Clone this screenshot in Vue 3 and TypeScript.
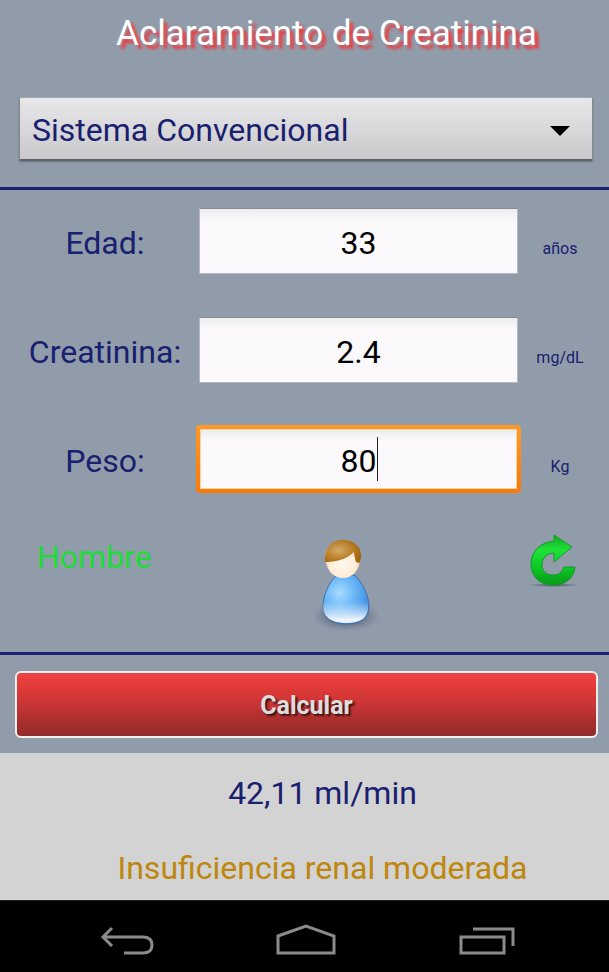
<script setup lang="ts">
import { ref, computed } from 'vue'

interface Field {
  id: string
  label: string
  unit: string
  value: string
}

const system = ref('Sistema Convencional')
const fields = ref<Field[]>([
  { id: 'edad', label: 'Edad:', unit: 'años', value: '33' },
  { id: 'creatinina', label: 'Creatinina:', unit: 'mg/dL', value: '2.4' },
  { id: 'peso', label: 'Peso:', unit: 'Kg', value: '80' },
])
const activeField = ref('peso')
const male = ref(true)
const sexLabel = computed(() => (male.value ? 'Hombre' : 'Mujer'))
const clearance = ref('42,11 ml/min')
const diagnosis = ref('Insuficiencia renal moderada')
</script>

<template>
  <div class="screen">
    <main class="app">
      <header class="head">
        <h1 class="title">Aclaramiento de Creatinina</h1>
        <div class="picker">
          <select v-model="system" class="system" aria-label="Sistema">
            <option>Sistema Convencional</option>
            <option>Sistema Internacional</option>
          </select>
          <svg class="caret" viewBox="0 0 20 10" aria-hidden="true"><path d="M0 0H20L10 10Z" /></svg>
        </div>
      </header>

      <section class="form">
        <div v-for="f in fields" :key="f.id" class="row">
          <label class="label" :for="f.id">{{ f.label }}</label>
          <div class="box" :class="{ active: f.id === activeField }">
            <input :id="f.id" v-model="f.value" class="input" type="text" inputmode="decimal" @focus="activeField = f.id" />
            <span v-if="f.id === activeField" class="cursor"></span>
          </div>
          <span class="unit">{{ f.unit }}</span>
        </div>
        <div class="row sex">
          <span class="sex-label">{{ sexLabel }}</span>
          <svg class="person" viewBox="0 0 74 96" aria-hidden="true">
            <defs>
              <radialGradient id="shade">
                <stop offset="0.4" stop-color="#46566a" stop-opacity="0.75" />
                <stop offset="1" stop-color="#6d7c8e" stop-opacity="0" />
              </radialGradient>
              <radialGradient id="body" cx="0.36" cy="0.36" r="0.68">
                <stop offset="0" stop-color="#a9dcff" />
                <stop offset="0.45" stop-color="#6db9f8" />
                <stop offset="1" stop-color="#3e8de0" />
              </radialGradient>
              <linearGradient id="glow" x1="0" y1="0" x2="0" y2="1">
                <stop offset="0.55" stop-color="#ffffff" stop-opacity="0" />
                <stop offset="0.93" stop-color="#ffffff" stop-opacity="0.9" />
              </linearGradient>
              <radialGradient id="face" cx="0.5" cy="0.6" r="0.6">
                <stop offset="0" stop-color="#fff8ed" />
                <stop offset="0.6" stop-color="#ffeed9" />
                <stop offset="1" stop-color="#ecc59a" />
              </radialGradient>
              <radialGradient id="hair" cx="0.38" cy="0.45" r="0.65">
                <stop offset="0" stop-color="#d3a967" />
                <stop offset="0.6" stop-color="#b97e28" />
                <stop offset="1" stop-color="#a36309" />
              </radialGradient>
            </defs>
            <ellipse cx="36" cy="80" rx="35" ry="16" fill="url(#shade)" />
            <path d="M26 40C19 46 13 60 13 70C13 83 24 88 37 88C50 88 59 82 59 71C59 59 52 47 45 39Z" fill="url(#body)" stroke="#416eae" stroke-width="1" />
            <path d="M26 40C19 46 13 60 13 70C13 83 24 87 37 87C50 87 58 82 58 71C58 59 52 47 45 39Z" fill="url(#glow)" />
            <path d="M15 21C15 10 23 6 34 6C45 6 50 12 50 22C50 34 43 42 33 42C23 42 16 34 15 21Z" fill="url(#face)" />
            <path d="M15 26C14 12 21 4 33 4C45 4 51 11 51 20C51 23 50 26 49 27L46 26C45 22 44 19 44 16C36 24 25 26 15 26Z" fill="url(#hair)" />
          </svg>
          <button class="swap" type="button" aria-label="Cambiar sexo" @click="male = !male">
            <svg viewBox="0 0 54 56" aria-hidden="true">
              <defs>
                <linearGradient id="green" x1="0" y1="0" x2="0" y2="1">
                  <stop offset="0" stop-color="#0dab20" />
                  <stop offset="0.3" stop-color="#20e23a" />
                  <stop offset="0.65" stop-color="#0bc826" />
                  <stop offset="1" stop-color="#099b18" />
                </linearGradient>
                <radialGradient id="ground">
                  <stop offset="0" stop-color="#394b55" stop-opacity="0.9" />
                  <stop offset="1" stop-color="#394b55" stop-opacity="0" />
                </radialGradient>
              </defs>
              <ellipse cx="27" cy="51" rx="26" ry="2" fill="url(#ground)" />
              <path d="M27 1L45 13L27 28V19C19 19 15 25 15 31C15 37 19 41 26 41C32 41 35 38 37 33H48C47 44 39 51 26 51C12 51 4 42 4 30C4 17 14 8 27 7Z" fill="url(#green)" stroke="#169a2c" stroke-width="1" />
            </svg>
          </button>
        </div>
      </section>

      <div class="actions">
        <button class="calc" type="button">Calcular</button>
      </div>

      <section class="result" aria-live="polite">
        <p class="line value">{{ clearance }}</p>
        <p class="line diagnosis">{{ diagnosis }}</p>
      </section>
    </main>

    <nav class="nav">
      <button type="button" aria-label="Atrás">
        <svg viewBox="0 0 60 32"><path d="M17 4L8 13L17 22M8 13H48C55 13 57 17 57 21C57 26 54 29 48 29H29" transform="translate(-1 0)" /></svg>
      </button>
      <button type="button" aria-label="Inicio">
        <svg viewBox="0 0 60 32"><path d="M2 12L30 2L58 12V29H2Z" /></svg>
      </button>
      <button type="button" aria-label="Recientes">
        <svg viewBox="0 0 60 32"><path d="M4 13H47V29H4ZM16 5H56V22" /></svg>
      </button>
    </nav>
  </div>
</template>

<style>
body {
  margin: 0;
  background: #000;
}
</style>

<style scoped>
.screen {
  min-height: 100vh;
  display: flex;
  flex-direction: column;
  font-family: Roboto, "Liberation Sans", sans-serif;
  font-size: 32px;
  line-height: 40px;
  color: #18206f;
  background: #000;
}
.screen *,
.screen {
  box-sizing: border-box;
}
.app {
  flex: 1;
  display: flex;
  flex-direction: column;
  background: #919cab;
}
.head {
  padding: 14px 16px 26px 19px;
  border-bottom: 3px solid #18206f;
}
.title {
  margin: 0 0 43px;
  padding-left: 41px;
  font-size: 35px;
  line-height: 40px;
  font-weight: 400;
  text-align: center;
  color: #fff;
  text-shadow: 4px 4px 3px #f0383c;
}
.picker {
  position: relative;
}
.system {
  display: block;
  width: 100%;
  height: 64px;
  padding: 3px 56px 0 12px;
  appearance: none;
  border: 1px solid #85898e;
  border-top-color: #a6abb1;
  border-bottom: 2px solid #5f6466;
  border-radius: 2px;
  background: linear-gradient(#e8e7e9, #c9c8ca);
  box-shadow: 0 1px 2px #66717f;
  font: inherit;
  color: inherit;
}
.caret {
  position: absolute;
  top: 29px;
  right: 23px;
  width: 20px;
  height: 10px;
  pointer-events: none;
}
.form {
  display: flex;
  flex-direction: column;
  gap: 41px;
  padding: 17px 10px 22px 14px;
  border-bottom: 3px solid #18206f;
}
.row {
  display: grid;
  grid-template-columns: 182px 1fr 78px;
  align-items: center;
}
.label {
  padding-top: 3px;
  text-align: center;
}
.box {
  position: relative;
  height: 68px;
  padding: 1px 3px;
}
.input {
  display: block;
  width: 100%;
  height: 100%;
  padding: 3px 0 0;
  border: 1px solid #b5b8bf;
  border-top-color: #858a93;
  border-radius: 0;
  outline: none;
  background: linear-gradient(#ececee, #fbf9fc 12px);
  font: inherit;
  text-align: center;
  color: #000;
}
.active {
  padding: 4px;
  border-radius: 4px;
  background: linear-gradient(#ff9a26, #f97906);
}
.active .input {
  border-color: #f4d2ac;
  caret-color: transparent;
}
.cursor {
  position: absolute;
  top: 12px;
  bottom: 12px;
  left: calc(50% + 18px);
  width: 1px;
  background: #222;
}
.unit {
  padding-top: 15px;
  font-size: 16px;
  line-height: 20px;
  text-align: center;
}
.sex {
  align-items: start;
}
.sex-label {
  padding: 3px 0 0 23px;
  color: #1fdb38;
}
.person {
  width: 74px;
  height: 96px;
  justify-self: center;
  margin: 2px 24px 0 0;
}
.sex {
  height: 96px;
}
.swap {
  justify-self: center;
  width: 54px;
  height: 56px;
  margin: 0 12px 0 0;
  padding: 0;
  border: 0;
  background: none;
}
.swap svg {
  display: block;
}
.actions {
  padding: 16px 11px 15px 15px;
}
.calc {
  display: block;
  width: 100%;
  height: 67px;
  padding: 2px 0 0;
  border: 2px solid #f3eeee;
  border-radius: 6px;
  background: linear-gradient(#f14144, #dc3936 28%, #c43437 55%, #b0302d 70%, #932b2d);
  font: inherit;
  font-size: 25px;
  font-weight: 700;
  color: #ddd;
  text-shadow: 2px 2px 2px #331414;
}
.result {
  flex: 1;
  display: flex;
  flex-direction: column;
  gap: 35px;
  padding: 20px 0 12px 36px;
  background: #d3d3d3;
  text-align: center;
}
.line {
  margin: 0;
}
.diagnosis {
  color: #bd860c;
}
.nav {
  display: grid;
  grid-template-columns: repeat(3, 1fr);
  height: 72px;
  padding: 0 32px 0 36px;
  background: #000;
  border-top: 1px solid #1c1c1c;
}
.nav button {
  display: flex;
  align-items: center;
  justify-content: center;
  padding: 6px 0 0;
  border: 0;
  background: none;
}
.nav svg {
  width: 60px;
  height: 32px;
  fill: none;
  stroke: #8b8b8b;
  stroke-width: 3;
}
</style>
